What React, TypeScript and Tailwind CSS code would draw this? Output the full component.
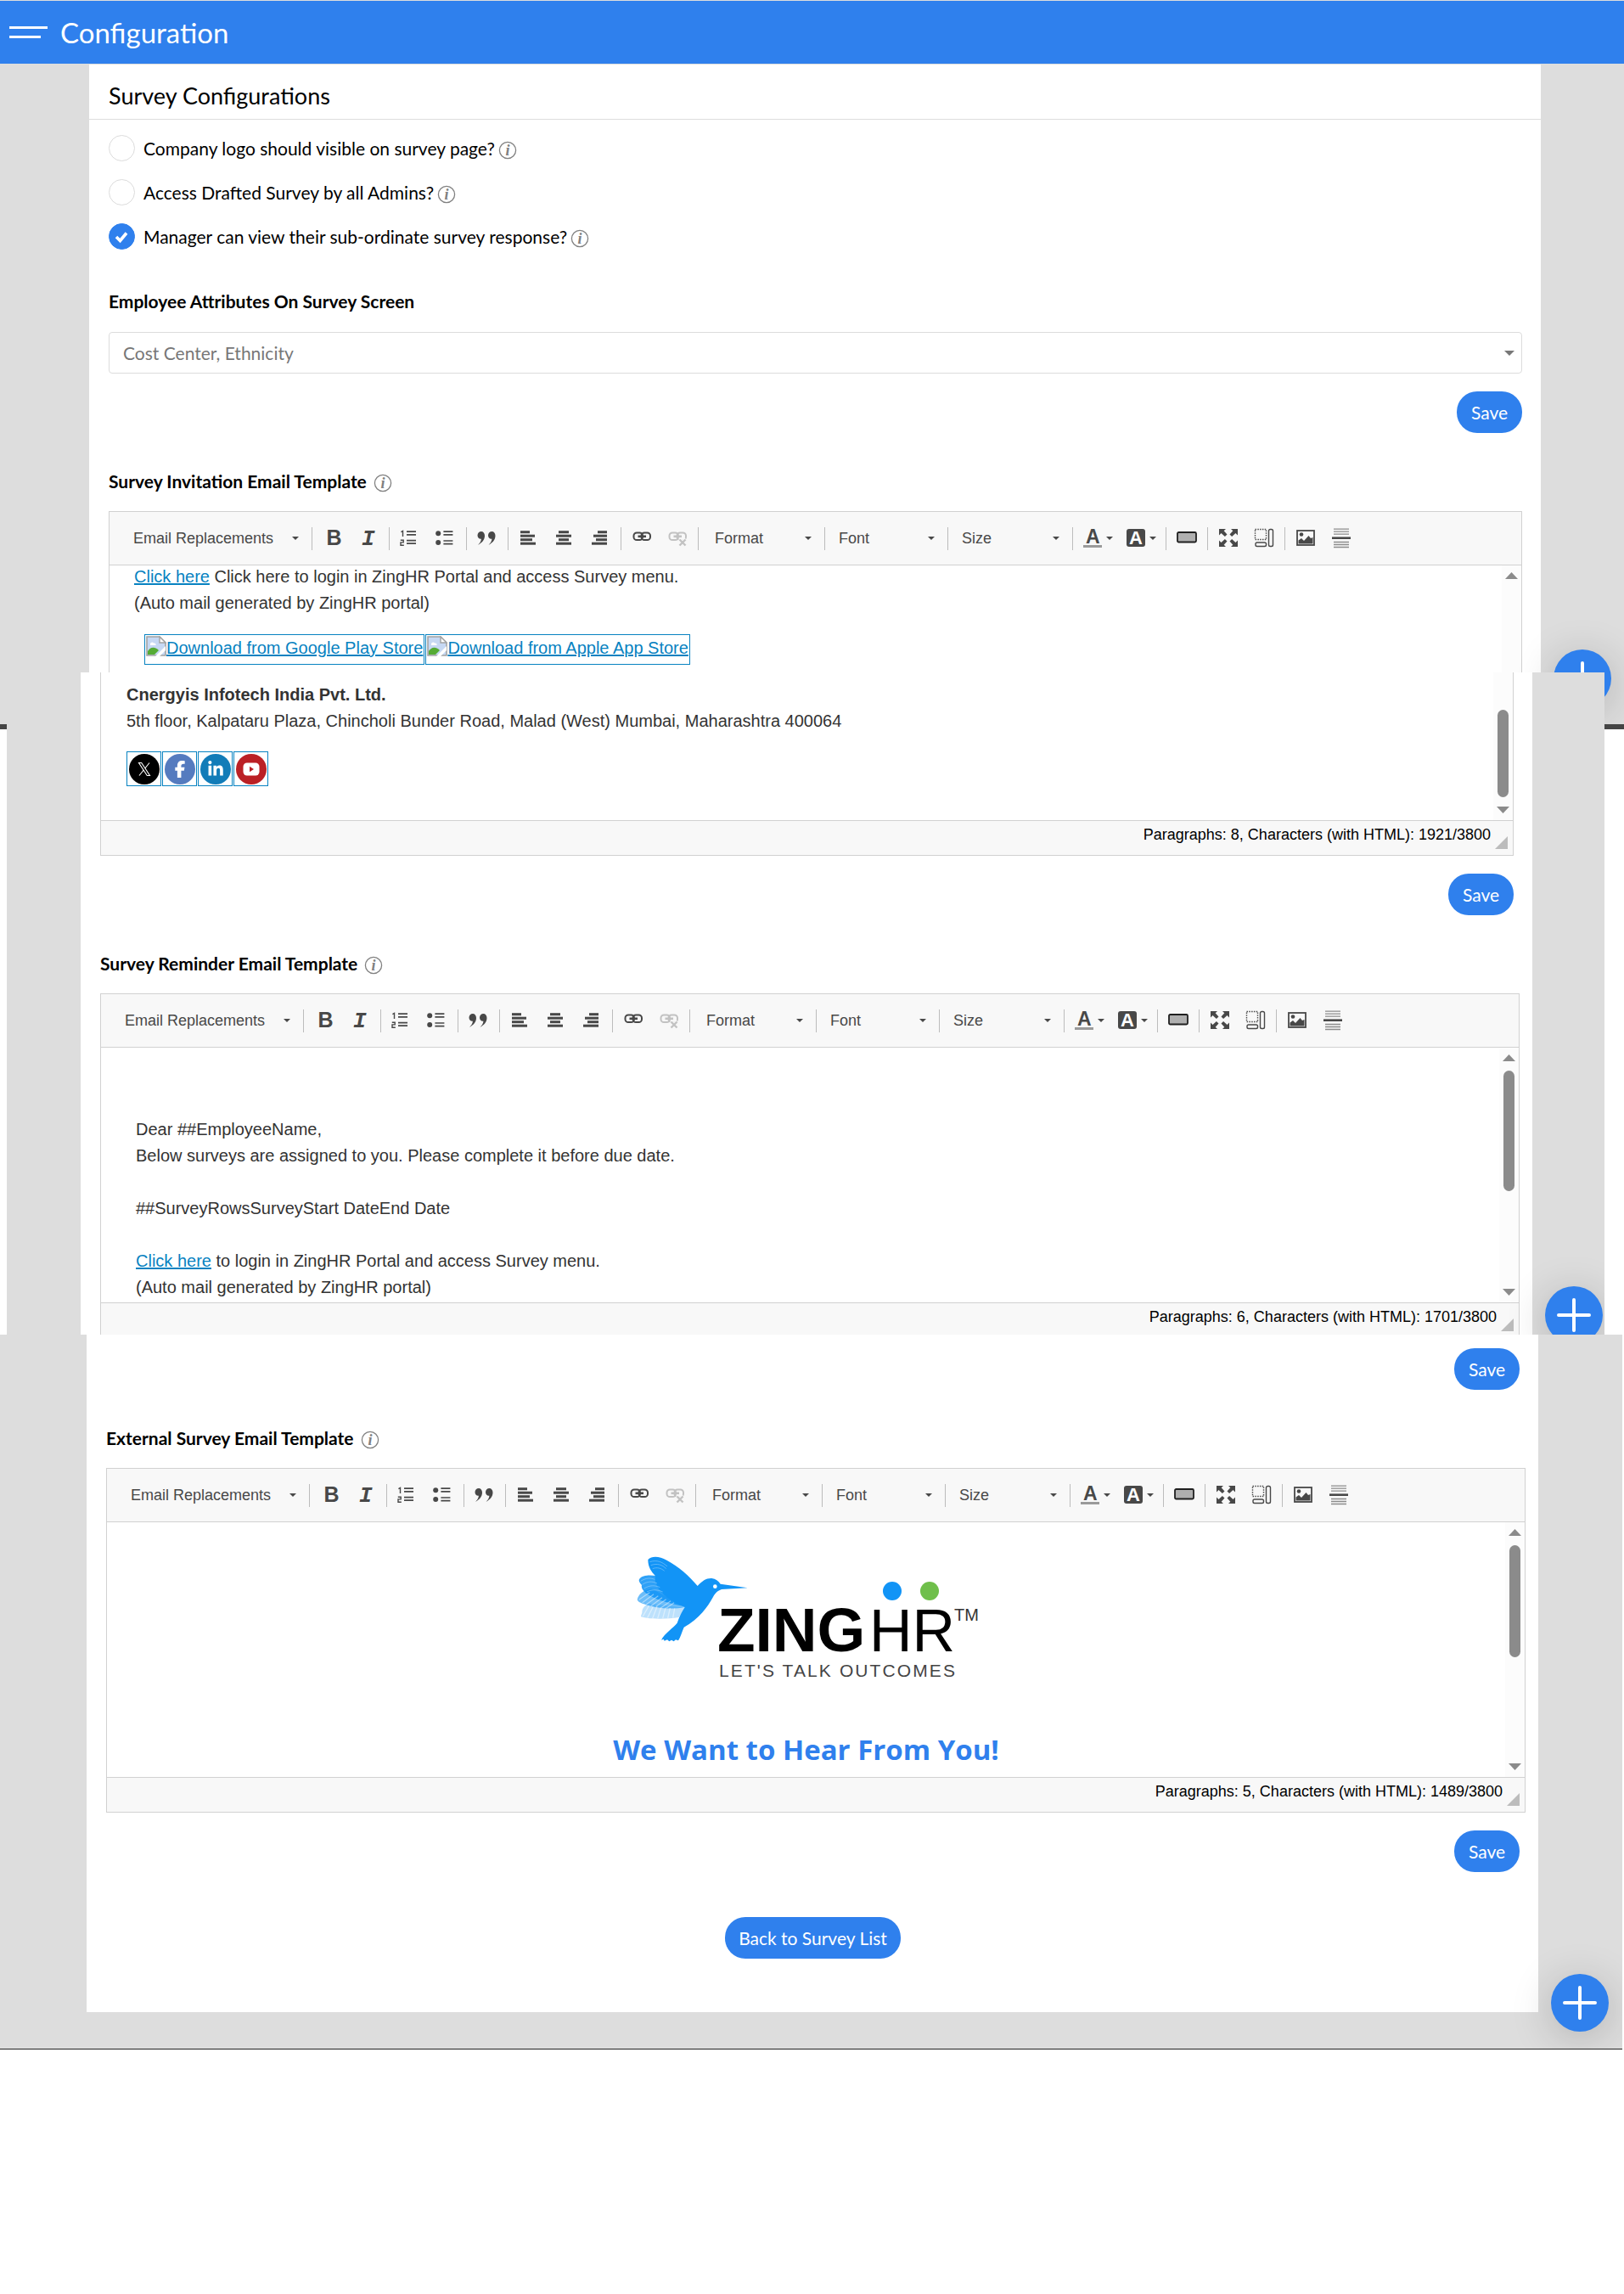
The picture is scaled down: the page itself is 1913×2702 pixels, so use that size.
import type { ReactNode } from "react";
import { FaFacebookF, FaLinkedinIn } from "react-icons/fa6";

const ink = "#484848";

function Icon({ children, label, faded }: { children: ReactNode; label: string; faded?: boolean }) {
  return (
    <button type="button" aria-label={label} className={faded ? "flex w-[42px] justify-center opacity-30" : "flex w-[42px] justify-center"}>
      <svg viewBox="0 0 24 24" className="size-6 overflow-visible" fill="none">
        {children}
      </svg>
    </button>
  );
}

function Sep() {
  return <span className="mx-[3px] h-[27px] w-px shrink-0 bg-[#bcbcbc]" />;
}

function Caret() {
  return (
    <svg viewBox="0 0 8 4" className="h-1 w-2 shrink-0">
      <path d="M0 0h8L4 4z" fill={ink} />
    </svg>
  );
}

function Combo({ label, className }: { label: string; className: string }) {
  return (
    <button type="button" aria-haspopup="listbox" className={`flex items-center justify-between pr-3 text-lg leading-6 ${className}`}>
      {label}
      <Caret />
    </button>
  );
}

function Bars({ rows }: { rows: [number, number][] }) {
  return (
    <>
      {rows.map(([x, w], i) => (
        <rect key={i} x={x} y={3.2 + i * 4.5} width={w} height="3" fill={ink} />
      ))}
    </>
  );
}

function Chain() {
  return (
    <g stroke={ink} strokeWidth="2">
      <rect x="2.5" y="5.5" width="10.5" height="8.5" rx="3.6" />
      <rect x="11.5" y="5.5" width="10.5" height="8.5" rx="3.6" />
      <path d="M7.5 9.8h9.5" strokeWidth="2.6" />
    </g>
  );
}

function Toolbar() {
  return (
    <div role="toolbar" aria-label="Formatting" className="flex h-[62px] items-center bg-[#f8f8f8] pl-7 font-['Liberation_Sans',sans-serif] text-[#484848]">
      <Combo label="Email Replacements" className="w-[207px]" />
      <Sep />
      <Icon label="Bold">
        <text x="4.5" y="20" fontSize="25" fontWeight="700" fill={ink}>B</text>
      </Icon>
      <Icon label="Italic">
        <text x="4" y="20" fontSize="26" fontWeight="700" fontStyle="italic" fontFamily="Liberation Mono" fill={ink}>I</text>
      </Icon>
      <Sep />
      <Icon label="Numbered list">
        <path d="M8 4.2h11M8 7.8h11M8 14.6h11M8 18.2h11" stroke={ink} strokeWidth="1.7" />
        <path d="M1.4 4.6 3.5 3.4V10M.8 14.2h3.4v2.7H1v3.3h3.8" stroke={ink} strokeWidth="1.4" />
      </Icon>
      <Icon label="Bulleted list">
        <circle cx="3.2" cy="6.3" r="3" fill={ink} />
        <circle cx="3.2" cy="17" r="3" fill={ink} />
        <path d="M9.4 4.2h11M9.4 7.8h11M9.4 15h11M9.4 18.6h11" stroke={ink} strokeWidth="1.7" />
      </Icon>
      <Sep />
      <Icon label="Block quote">
        <path d="M4.900 4C7.300 4 9 6 9 9c0 5-3.600 8.500-7.900 10.800 2.600-2.600 3.600-4.600 3.800-7-2.600.4-4.400-1.600-4.400-4.300C.5 6 2.500 4 4.900 4zM17.400 4c2.400 0 4.100 2 4.100 5 0 5-3.600 8.500-7.900 10.800 2.600-2.600 3.600-4.600 3.800-7-2.600.4-4.400-1.600-4.400-4.300C13 6 15 4 17.400 4z" fill={ink} />
      </Icon>
      <Sep />
      <Icon label="Align left">
        <Bars rows={[[2, 11], [2, 17], [2, 14], [2, 18]]} />
      </Icon>
      <Icon label="Center">
        <Bars rows={[[5, 12], [2, 18], [5, 12], [2, 18]]} />
      </Icon>
      <Icon label="Align right">
        <Bars rows={[[9, 11], [4, 16], [7, 13], [2, 18]]} />
      </Icon>
      <Sep />
      <Icon label="Link">
        <Chain />
      </Icon>
      <Icon label="Unlink" faded>
        <Chain />
        <path d="m14 13 8 8m0-8-8 8" stroke="#f8f8f8" strokeWidth="5" />
        <path d="m14.500 13.500 7 7m0-7-7 7" stroke={ink} strokeWidth="2.400" />
      </Icon>
      <Sep />
      <Combo label="Format" className="w-[142px] pl-4" />
      <Sep />
      <Combo label="Font" className="w-[138px] pl-[13px]" />
      <Sep />
      <Combo label="Size" className="w-[140px] pl-[13px]" />
      <Sep />
      <button type="button" aria-label="Text color" className="flex w-[51px] items-center gap-1 pl-2">
        <svg viewBox="0 0 24 24" className="size-6 overflow-visible">
          <text x="4" y="18" fontSize="23" fontWeight="700" fill={ink}>A</text>
          <rect x="1" y="20" width="22" height="3" fill="#9a9a9a" />
        </svg>
        <Caret />
      </button>
      <button type="button" aria-label="Background color" className="flex w-[52px] items-center gap-1 pl-2">
        <svg viewBox="0 0 24 24" className="size-6 overflow-visible">
          <rect x="1" y="1" width="22" height="21" rx="3" fill={ink} />
          <text x="4" y="19" fontSize="22" fontWeight="700" fill="#fff">A</text>
        </svg>
        <Caret />
      </button>
      <Sep />
      <Icon label="Button">
        <rect x="1" y="5" width="22" height="11.500" rx="1.500" fill="#afafaf" stroke="#1f1f1f" strokeWidth="1.800" />
      </Icon>
      <Sep />
      <Icon label="Maximize">
        <path d="M1 1h8L6.700 3.300l3.800 4.200-2.600 2.600L3.500 6 1 8.500zM23 1h-8l2.300 2.300-3.800 4.200 2.600 2.600L20.500 6 23 8.500zM1 22h8l-2.300-2.300 3.800-4.200-2.600-2.600L3.500 17 1 14.500zM23 22h-8l2.300-2.300-3.800-4.200 2.600-2.600 4.400 4.100 2.500-2.500z" fill={ink} />
      </Icon>
      <Icon label="Show blocks">
        <rect x="1.500" y="1.500" width="13" height="12" stroke={ink} strokeWidth="1.400" strokeDasharray="1.500 1.300" />
        <rect x="17.500" y="1.500" width="5" height="20" rx="1.800" stroke={ink} strokeWidth="1.400" />
        <rect x="2" y="17" width="12.500" height="4.500" rx="1.800" stroke={ink} strokeWidth="1.400" />
      </Icon>
      <Sep />
      <Icon label="Image">
        <rect x="2" y="3" width="20" height="17" stroke={ink} strokeWidth="1.800" />
        <circle cx="7" cy="7.500" r="2.300" fill={ink} />
        <path d="M3.500 18.500v-4L7 12l3 3 5.500-6 2.500 3 2.500-1v7.500z" fill={ink} />
      </Icon>
      <Icon label="Page break">
        <path d="M3 1.200h18M3 4.200h18M3 7.200h18M3 16.500h18M3 19.500h18M3 22.500h18" stroke="#8c8c8c" strokeWidth="1.300" />
        <path d="M1 11.700h22" stroke={ink} strokeWidth="2.600" />
      </Icon>
    </div>
  );
}

function Info() {
  return (
    <svg viewBox="0 0 22 22" className="mt-1 size-[22px] shrink-0 overflow-visible" role="img" aria-label="More information">
      <circle cx="11" cy="11" r="9.600" fill="none" stroke="#808080" strokeWidth="1.300" />
      <text x="11" y="17" textAnchor="middle" fontFamily="Liberation Serif" fontStyle="italic" fontWeight="700" fontSize="18" fill="#808080">i</text>
    </svg>
  );
}

function Heading({ children }: { children: string }) {
  return (
    <h2 className="mt-11 flex h-[26px] items-center gap-2 text-[21px] leading-[26px] font-bold text-black">
      {children}
      <Info />
    </h2>
  );
}

function Option({ children, checked }: { children: string; checked?: boolean }) {
  return (
    <div className="flex h-[31px] items-center gap-1">
      <label className="relative flex items-center gap-[10px] text-[21px] leading-[26px] text-black">
        <input
          type="checkbox"
          defaultChecked={checked}
          className="peer size-[31px] appearance-none rounded-full border border-[#dcdcdc] checked:border-[#2f80ed] checked:bg-[#2f80ed]"
        />
        <svg viewBox="0 0 31 31" className="pointer-events-none absolute top-0 left-0 hidden size-[31px] peer-checked:block">
          <path d="m9 16 4.500 4.500 7.500-9" fill="none" stroke="#fff" strokeWidth="3.600" />
        </svg>
        {children}
      </label>
      <Info />
    </div>
  );
}

function PillButton({ children, className }: { children: string; className: string }) {
  return (
    <button type="button" className={`h-[49px] rounded-[24px] bg-[#2f80ed] text-[21px] leading-[26px] text-white ${className}`}>
      {children}
    </button>
  );
}

function SaveRow() {
  return (
    <div className="mt-[21px] flex justify-end">
      <PillButton className="w-[77px]">Save</PillButton>
    </div>
  );
}

function ScrollArrow({ down }: { down?: boolean }) {
  return (
    <svg viewBox="0 0 15 8" className="h-2 w-[15px] shrink-0">
      <path d={down ? "M0 0h15L7.500 8z" : "M0 8h15L7.500 0z"} fill="#8b8b8b" />
    </svg>
  );
}

function Track({ children }: { children: ReactNode }) {
  return (
    <div aria-hidden className="flex w-[23px] shrink-0 flex-col items-center bg-[#fcfcfc] py-2">
      {children}
    </div>
  );
}

function Thumb({ className }: { className: string }) {
  return <span className={`w-[13px] rounded-full bg-[#8b8b8b] ${className}`} />;
}

const mail = "min-w-0 flex-1 font-['Liberation_Sans',sans-serif] text-xl leading-[31px] text-[#333]";
const link = "text-[#0782c1] underline";

function EditorFooter({ children }: { children: string }) {
  return (
    <div className="flex h-10 items-start justify-end gap-[5px] bg-[#f8f8f8] pt-1 pr-[6px] font-['Liberation_Sans',sans-serif] text-lg leading-6 text-black">
      {children}
      <svg viewBox="0 0 15 15" className="mt-[14px] size-[15px]">
        <path d="M15 0v15H0z" fill="#bcbcbc" />
      </svg>
    </div>
  );
}

function Fab({ className }: { className: string }) {
  return (
    <button
      type="button"
      aria-label="Add"
      className={`absolute flex size-[68px] items-center justify-center rounded-full bg-[#2f80ed] shadow-[0_8px_50px_rgba(0,0,0,0.2)] ${className}`}
    >
      <svg viewBox="0 0 40 40" className="size-10">
        <path d="M20 2v36M2 20h36" stroke="#fff" strokeWidth="4" strokeLinecap="round" />
      </svg>
    </button>
  );
}

function BrokenImage({ alt }: { alt: string }) {
  return (
    <a href="#store" className="flex h-9 items-start border border-[#0782c1] px-px text-[#0782c1] underline">
      <svg viewBox="0 0 24 24" className="mt-px size-6">
        <path d="M1 1h15l7 7v15H1z" fill="#c6d8f3" stroke="#a3a3a3" strokeWidth="1.600" />
        <path d="M16 1v7h7z" fill="#fff" stroke="#a3a3a3" strokeWidth="1.400" />
        <path d="M5 9.500c0-2 3-3 4-1 2-.5 3 1 2.500 2.500H5z" fill="#fff" />
        <path d="M2 22v-4c3-5 8-6 13-1l-5 5z" fill="#55ab35" />
        <path d="m11 24 12-12v5l-7 7z" fill="#fff" />
      </svg>
      {alt}
    </a>
  );
}

function Social({ label, className, children }: { label: string; className: string; children: ReactNode }) {
  return (
    <a href="#social" aria-label={label} className="flex h-[41px] w-[41px] items-center justify-center border border-[#0782c1]">
      <span className={`flex size-9 items-center justify-center rounded-full text-white ${className}`}>{children}</span>
    </a>
  );
}

function Logo() {
  return (
    <svg viewBox="0 0 420 160" className="h-40 w-[420px]" role="img" aria-label="ZingHR" fontFamily="Liberation Sans">
      <g transform="scale(0.33333)" fill="#1294f6">
        <path d="M45 238c0-8 4-10 4-16 0-14 12-28 28-30l122 14-20 34c-40 6-100 8-134-2z" opacity=".28" />
        <path d="M32 178c4-20 22-34 50-40l122 66c-60 10-110 2-140-8-18-5-29-10-32-18z" opacity=".62" />
        <path d="M38 108c6-16 32-20 64-14l102 108C140 190 90 176 60 152c-12-12-14-20-12-26-6-6-10-12-10-18z" opacity=".88" />
        <path d="M70 36c14-14 40-12 66 2 42 22 80 56 109 91 16-18 32-28 50-27 14 2 24 10 31 20l96 13.500-92 5.500c-14 5-22 12-30 27-20 36-48 76-103 107-7 15-12 35-20 47l-9-3-7 6-8-5-8 5-7-6-10 4-3-6-8 3c12-24 42-42 56-60 8-24 18-42 27-56-40-18-90-44-104-90-2-8 0-14 0-20-14-16-26-30-26-58z" />
        <circle cx="307" cy="131" r="7" fill="#fff" />
        <g fill="none" stroke="#fff" strokeWidth="2" opacity=".45">
          <path d="M76 44c26-8 44 0 62 16M80 56c22-8 40-2 54 12M86 68c16-6 30-2 42 8" />
          <path d="M44 112c20-12 34-12 50-6M50 124c18-12 36-12 52-4M56 138c20-12 38-12 56-4M66 150c20-10 38-8 56 0" />
          <path d="M38 178 76 152M50 188l40-30M64 194l42-30M80 200l40-30M98 202l36-26M116 206l34-24M134 208l28-20" strokeWidth="3.500" />
          <path d="m52 236 22-38M68 242l20-40M86 244l16-42M104 244l12-40M122 244l10-38M140 243l8-36M158 242l6-34" strokeWidth="4" />
        </g>
      </g>
      <circle cx="311" cy="49" r="11" fill="#1294f6" />
      <circle cx="355" cy="49" r="11" fill="#6fbf4b" />
      <text x="105" y="120" fontSize="73" fontWeight="700" fill="#000">ZING</text>
      <text x="284" y="120" fontSize="70" fill="#000">HR</text>
      <text x="384" y="84" fontSize="20" fill="#333">TM</text>
      <text x="107" y="150" fontSize="21" fill="#444" className="tracking-widest">LET'S TALK OUTCOMES</text>
    </svg>
  );
}

export default function App() {
  return (
    <div className="min-h-screen bg-white font-['Lato',sans-serif]">
      <section className="relative overflow-hidden border-b-[6px] border-[#444] bg-[#ddd]">
        <header className="mb-px flex h-[75px] items-center gap-[15px] border-t border-[#ddd] bg-[#2f80ed] pl-[11px]">
          <button type="button" aria-label="Menu" className="flex w-[45px] flex-col gap-2">
            <span className="h-[3px] w-full bg-white" />
            <span className="h-[3px] w-[37px] bg-white" />
          </button>
          <h1 className="text-[33px] leading-10 text-white">Configuration</h1>
        </header>
        <main className="mr-[98px] ml-[105px] bg-white">
          <h2 className="border-b border-[#ddd] pt-[21px] pb-[11px] pl-[23px] text-[27px] leading-8 text-black">Survey Configurations</h2>
          <div className="pt-[18px] pr-[22px] pl-[23px]">
            <div className="flex flex-col gap-[21px]">
              <Option>Company logo should visible on survey page?</Option>
              <Option>Access Drafted Survey by all Admins?</Option>
              <Option checked>Manager can view their sub-ordinate survey response?</Option>
            </div>
            <label htmlFor="attributes" className="mt-12 block text-[21px] leading-[26px] font-bold text-black">
              Employee Attributes On Survey Screen
            </label>
            <div className="relative mt-[23px]">
              <select id="attributes" className="block h-[49px] w-full appearance-none rounded-[4px] border border-[#dcdcdc] bg-white px-4 text-[21px] leading-[26px] text-[#777]">
                <option>Cost Center, Ethnicity</option>
              </select>
              <svg viewBox="0 0 12 6" className="pointer-events-none absolute top-[22px] right-[9px] h-[6px] w-3">
                <path d="M0 0h12L6 6z" fill="#777" />
              </svg>
            </div>
            <SaveRow />
            <Heading>Survey Invitation Email Template</Heading>
            <div className="mt-[22px] border border-b-0 border-[#d1d1d1]">
              <Toolbar />
              <div className="flex h-[188px] border-t border-[#d1d1d1]">
                <div className={`${mail} pl-[29px]`}>
                  <p className="-mt-0.5">
                    <a href="#login" className={link}>Click here</a> Click here to login in ZingHR Portal and access Survey menu.
                  </p>
                  <p>(Auto mail generated by ZingHR portal)</p>
                  <div className="mt-[21px] ml-3 flex gap-px">
                    <BrokenImage alt="Download from Google Play Store" />
                    <BrokenImage alt="Download from Apple App Store" />
                  </div>
                </div>
                <Track>
                  <ScrollArrow />
                </Track>
              </div>
            </div>
          </div>
        </main>
        <Fab className="right-[15px] bottom-5" />
      </section>

      <section className="relative -mt-[67px] mr-[23px] ml-2 overflow-hidden bg-[#ddd]">
        <div className="mr-[85px] ml-[87px] bg-white pr-[22px] pl-[23px]">
          <div className="border border-t-0 border-[#d1d1d1]">
            <div className="flex h-[174px]">
              <div className={`${mail} pt-[11px] pl-[30px]`}>
                <p className="font-bold">Cnergyis Infotech India Pvt. Ltd.</p>
                <p>5th floor, Kalpataru Plaza, Chincholi Bunder Road, Malad (West) Mumbai, Maharashtra 400064</p>
                <div className="mt-5 flex gap-px">
                  <Social label="X" className="bg-black">
                    <svg viewBox="0 0 20 20" className="size-5" fill="none" stroke="#fff" strokeWidth="1.100">
                      <path d="M16 2.500 4 17.500" />
                      <path d="M3.500 2.500h3.200L16.500 17.500h-3.200z" fill="#000" />
                    </svg>
                  </Social>
                  <Social label="Facebook" className="bg-[#557bbf]">
                    <FaFacebookF className="size-5" />
                  </Social>
                  <Social label="LinkedIn" className="bg-[#127cb8]">
                    <FaLinkedinIn className="size-5" />
                  </Social>
                  <Social label="YouTube" className="bg-[#bb2025]">
                    <svg viewBox="0 0 20 16" className="h-4 w-5">
                      <rect x=".5" y=".5" width="19" height="15" rx="4.500" fill="#fff" />
                      <path d="M8 4.800v6.400L13 8z" fill="#bb2025" />
                    </svg>
                  </Social>
                </div>
              </div>
              <Track>
                <Thumb className="mt-9 mb-[11px] h-[103px]" />
                <ScrollArrow down />
              </Track>
            </div>
            <div className="border-t border-[#d1d1d1]">
              <EditorFooter>Paragraphs: 8, Characters (with HTML): 1921/3800</EditorFooter>
            </div>
          </div>
          <SaveRow />
          <Heading>Survey Reminder Email Template</Heading>
          <div className="mt-[22px] -mr-[7px] h-[402px] border border-b-0 border-[#d1d1d1]">
            <Toolbar />
            <div className="flex h-[302px] border-y border-[#d1d1d1]">
              <div className={`${mail} pt-[81px] pl-[41px]`}>
                <p>Dear ##EmployeeName,</p>
                <p className="mb-[31px]">Below surveys are assigned to you. Please complete it before due date.</p>
                <p className="mb-[31px]">##SurveyRowsSurveyStart DateEnd Date</p>
                <p>
                  <a href="#login" className={link}>Click here</a> to login in ZingHR Portal and access Survey menu.
                </p>
                <p>(Auto mail generated by ZingHR portal)</p>
              </div>
              <Track>
                <ScrollArrow />
                <Thumb className="mt-[11px] mb-auto h-[142px]" />
                <ScrollArrow down />
              </Track>
            </div>
            <EditorFooter>Paragraphs: 6, Characters (with HTML): 1701/3800</EditorFooter>
          </div>
        </div>
        <Fab className="right-[2px] -bottom-[11px]" />
      </section>

      <section className="relative mr-[2px] overflow-hidden border-b border-[#222] bg-[#ddd] pb-[43px]">
        <div className="mr-[99px] ml-[102px] bg-white pr-[22px] pb-[63px] pl-[23px]">
          <div className="flex justify-end pt-4">
            <PillButton className="w-[77px]">Save</PillButton>
          </div>
          <Heading>External Survey Email Template</Heading>
          <div className="mt-[22px] -mr-[7px] border border-[#d1d1d1]">
            <Toolbar />
            <div className="flex h-[302px] border-y border-[#d1d1d1]">
              <div className="flex min-w-0 flex-1 flex-col items-center pt-8">
                <Logo />
                <p className="mt-[54px] font-['Open_Sans',sans-serif] text-[33px] leading-[44px] font-bold text-[#2f80ed]">We Want to Hear From You!</p>
              </div>
              <Track>
                <ScrollArrow />
                <Thumb className="mt-[11px] mb-auto h-[132px]" />
                <ScrollArrow down />
              </Track>
            </div>
            <EditorFooter>Paragraphs: 5, Characters (with HTML): 1489/3800</EditorFooter>
          </div>
          <SaveRow />
          <div className="mt-[53px] flex justify-center">
            <PillButton className="px-4">Back to Survey List</PillButton>
          </div>
        </div>
        <Fab className="right-4 bottom-5" />
      </section>
    </div>
  );
}
